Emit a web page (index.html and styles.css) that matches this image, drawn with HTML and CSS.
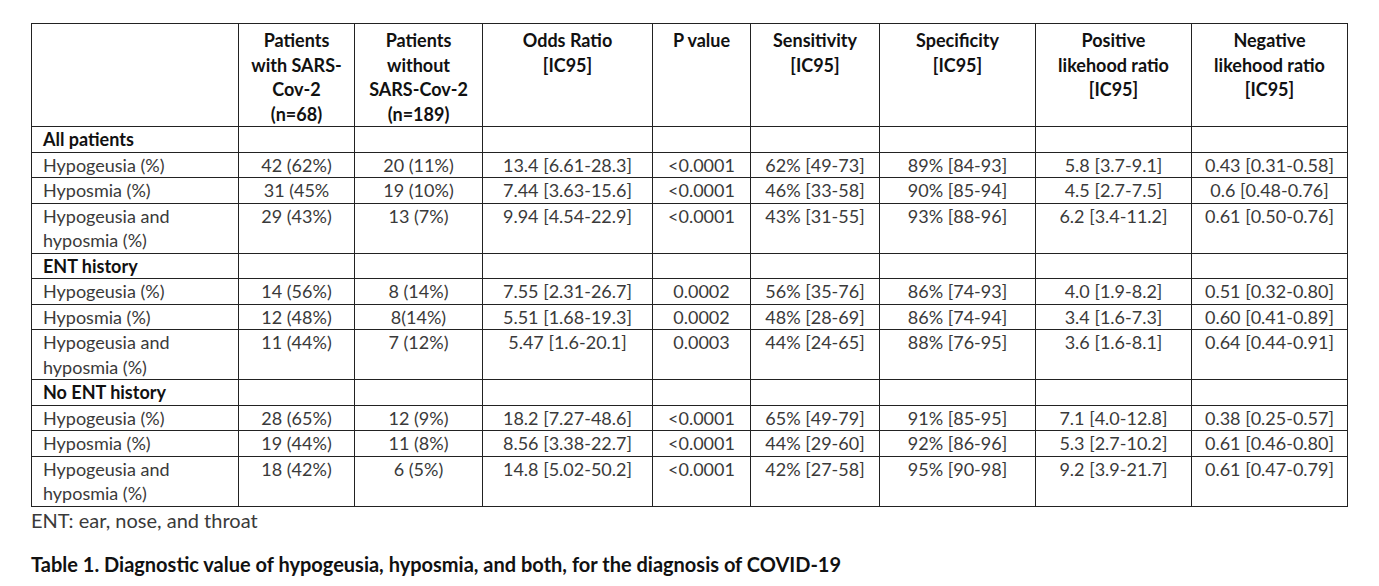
FILE: index.html
```html
<!DOCTYPE html>
<html lang="en">
<head>
<meta charset="utf-8">
<title>Table 1</title>
<link rel="stylesheet" href="styles.css">
</head>
<body>
<div class="page">
  <table class="data">
    <colgroup>
      <col class="c-label">
      <col class="c-with">
      <col class="c-without">
      <col class="c-or">
      <col class="c-p">
      <col class="c-sens">
      <col class="c-spec">
      <col class="c-plr">
      <col class="c-nlr">
    </colgroup>
    <thead>
      <tr class="head">
        <th></th>
        <th>Patients<br>with SARS-<br>Cov-2<br>(n=68)</th>
        <th>Patients<br>without<br>SARS-Cov-2<br>(n=189)</th>
        <th>Odds Ratio<br>[IC95]</th>
        <th>P value</th>
        <th>Sensitivity<br>[IC95]</th>
        <th>Specificity<br>[IC95]</th>
        <th>Positive<br>likehood ratio<br>[IC95]</th>
        <th>Negative<br>likehood ratio<br>[IC95]</th>
      </tr>
    </thead>
    <tbody>
      <tr class="section"><td>All patients</td><td></td><td></td><td></td><td></td><td></td><td></td><td></td><td></td></tr>
      <tr><td>Hypogeusia (%)</td><td>42 (62%)</td><td>20 (11%)</td><td>13.4 [6.61-28.3]</td><td>&lt;0.0001</td><td>62% [49-73]</td><td>89% [84-93]</td><td>5.8 [3.7-9.1]</td><td>0.43 [0.31-0.58]</td></tr>
      <tr><td>Hyposmia (%)</td><td>31 (45%</td><td>19 (10%)</td><td>7.44 [3.63-15.6]</td><td>&lt;0.0001</td><td>46% [33-58]</td><td>90% [85-94]</td><td>4.5 [2.7-7.5]</td><td>0.6 [0.48-0.76]</td></tr>
      <tr><td>Hypogeusia and<br>hyposmia (%)</td><td>29 (43%)</td><td>13 (7%)</td><td>9.94 [4.54-22.9]</td><td>&lt;0.0001</td><td>43% [31-55]</td><td>93% [88-96]</td><td>6.2 [3.4-11.2]</td><td>0.61 [0.50-0.76]</td></tr>
      <tr class="section"><td>ENT history</td><td></td><td></td><td></td><td></td><td></td><td></td><td></td><td></td></tr>
      <tr><td>Hypogeusia (%)</td><td>14 (56%)</td><td>8 (14%)</td><td>7.55 [2.31-26.7]</td><td>0.0002</td><td>56% [35-76]</td><td>86% [74-93]</td><td>4.0 [1.9-8.2]</td><td>0.51 [0.32-0.80]</td></tr>
      <tr><td>Hyposmia (%)</td><td>12 (48%)</td><td>8(14%)</td><td>5.51 [1.68-19.3]</td><td>0.0002</td><td>48% [28-69]</td><td>86% [74-94]</td><td>3.4 [1.6-7.3]</td><td>0.60 [0.41-0.89]</td></tr>
      <tr><td>Hypogeusia and<br>hyposmia (%)</td><td>11 (44%)</td><td>7 (12%)</td><td>5.47 [1.6-20.1]</td><td>0.0003</td><td>44% [24-65]</td><td>88% [76-95]</td><td>3.6 [1.6-8.1]</td><td>0.64 [0.44-0.91]</td></tr>
      <tr class="section"><td>No ENT history</td><td></td><td></td><td></td><td></td><td></td><td></td><td></td><td></td></tr>
      <tr><td>Hypogeusia (%)</td><td>28 (65%)</td><td>12 (9%)</td><td>18.2 [7.27-48.6]</td><td>&lt;0.0001</td><td>65% [49-79]</td><td>91% [85-95]</td><td>7.1 [4.0-12.8]</td><td>0.38 [0.25-0.57]</td></tr>
      <tr><td>Hyposmia (%)</td><td>19 (44%)</td><td>11 (8%)</td><td>8.56 [3.38-22.7]</td><td>&lt;0.0001</td><td>44% [29-60]</td><td>92% [86-96]</td><td>5.3 [2.7-10.2]</td><td>0.61 [0.46-0.80]</td></tr>
      <tr><td>Hypogeusia and<br>hyposmia (%)</td><td>18 (42%)</td><td>6 (5%)</td><td>14.8 [5.02-50.2]</td><td>&lt;0.0001</td><td>42% [27-58]</td><td>95% [90-98]</td><td>9.2 [3.9-21.7]</td><td>0.61 [0.47-0.79]</td></tr>
    </tbody>
  </table>
  <p class="note">ENT: ear, nose, and throat</p>
  <p class="caption">Table 1. Diagnostic value of hypogeusia, hyposmia, and both, for the diagnosis of COVID-19</p>
</div>
</body>
</html>
```

FILE: styles.css
```css
html, body {
  margin: 0;
  padding: 0;
  background: #ffffff;
}

.page {
  padding: 23px 0 0 31px;
  font-family: Lato, "Open Sans", "Liberation Sans", sans-serif;
  font-size: 18px;
  color: #3a3a3a;
}

.data {
  border-collapse: collapse;
  table-layout: fixed;
  width: 1316px;
}

.c-label { width: 207px; }
.c-with { width: 116px; }
.c-without { width: 128px; }
.c-or { width: 170px; }
.c-p { width: 98px; }
.c-sens { width: 129px; }
.c-spec { width: 156px; }
.c-plr { width: 156px; }
.c-nlr { width: 156px; }

.data th,
.data td {
  border: 1px solid #222222;
  padding: 0 2px;
  line-height: 24.5px;
  text-align: center;
  vertical-align: top;
  white-space: nowrap;
}

.data th {
  color: #111111;
  font-weight: 700;
  padding-top: 4px;
}

.head { height: 103px; }

.data td:first-child {
  text-align: left;
  padding-left: 11px;
}

.section td:first-child {
  font-weight: 700;
  color: #111111;
}

.note {
  margin: 1px 0 0 0;
  font-size: 20px;
  line-height: 25px;
}

.caption {
  margin: 19px 0 0 0;
  font-size: 20px;
  line-height: 25px;
  font-weight: 700;
  color: #111111;
}
```
